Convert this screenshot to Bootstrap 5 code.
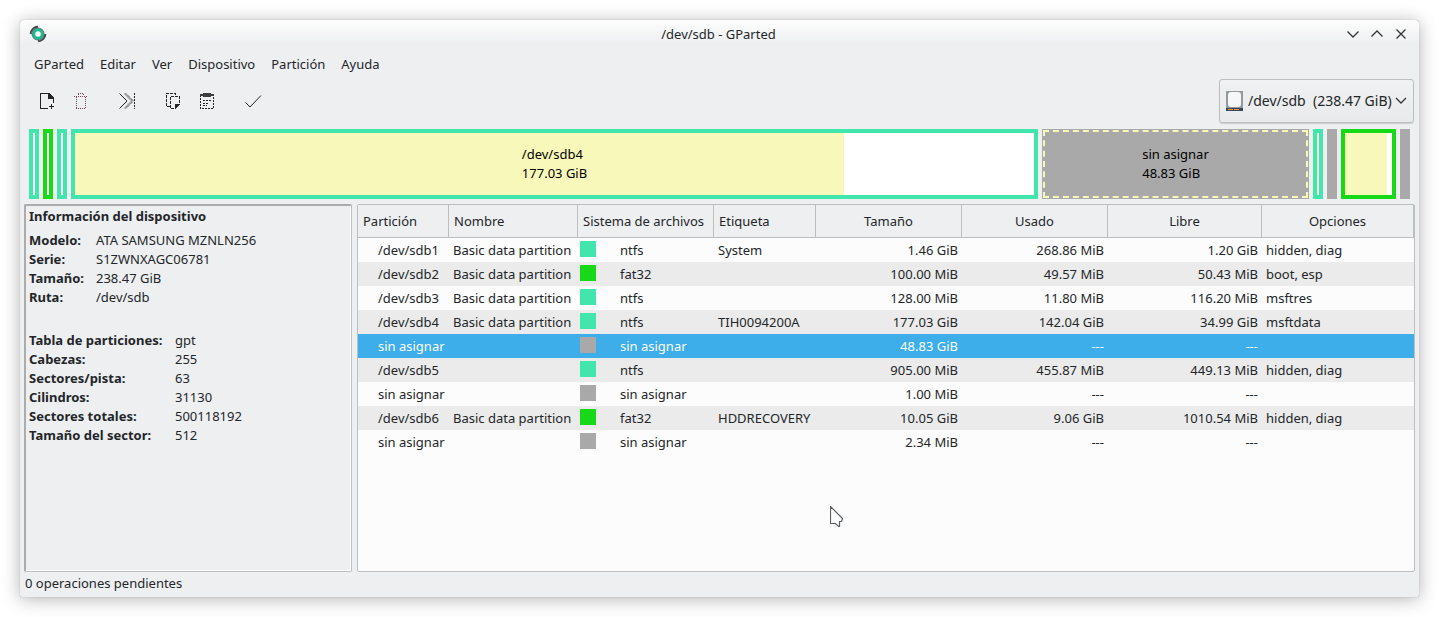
<!DOCTYPE html>
<html lang="es">
<head>
<meta charset="utf-8">
<meta name="viewport" content="width=device-width, initial-scale=1">
<title>/dev/sdb - GParted</title>
<link href="https://cdn.jsdelivr.net/npm/bootstrap@5.3.0/dist/css/bootstrap.min.css" rel="stylesheet">
<style>
:root{--ntfs:#42e5ac;--fat:#18d918;--free:#a9a9a9;--used:#f8f8ba;--line:#bcbebf;--ink:#232629}
body{background:#fff;color:var(--ink);font:13px/19px "Noto Sans",sans-serif}
.frame{min-height:calc(100vh - 40px);margin:20px;background:#eeeff1 linear-gradient(#fdfdfd,#eeeff1) no-repeat top/100% 24px;border-radius:4px 4px 2px 2px;box-shadow:0 0 1px rgba(0,0,0,.4),0 2px 18px rgba(0,0,0,.3)}
.titlebar{height:28px;padding:0 10px 0 8px}
.side{flex:1 0 0}
.plain{background:none;border:0;padding:0;color:inherit;line-height:0}
.menus{height:31px;padding:1px 0 0 14px;gap:16px}
.menus .plain{line-height:19px}
.tools{height:44px;padding:0 5px 0 10px}
.tool{width:34px;height:34px}
.tool + .split{width:12px}
.device select{width:195px;height:44px;padding:0 18px 2px 28px;border:1px solid var(--line);border-radius:3px;background:linear-gradient(#f0f1f2,#e9eaec);box-shadow:0 1px 1px rgba(0,0,0,.15);font-size:14px;color:inherit;appearance:none}
.device svg{position:absolute;pointer-events:none;top:12px}
.device .disk{left:7px}
.device .chev{right:7px}
.map{height:70px;margin:6px 9px 0;gap:4px}
.part{border:4px solid var(--ntfs);background:#fff;min-width:10px;color:#000}
.part.fat{border-color:var(--fat)}
.part.none{border-color:var(--free);background:var(--free)}
.part .fill{position:absolute;inset:0 auto 0 0;background:var(--used)}
.part.picked{border:0;outline:2px dashed var(--used);outline-offset:-3px}
.panes{margin:5px 4px 0;gap:5px}
.info{width:328px;border:1px solid var(--line);border-top:2px solid #aaacae;border-left:2px solid #aaacae;border-radius:2px;padding:1px 3px;box-shadow:inset -1px -1px #fff}
.info h2{font-size:13px;line-height:19px;font-weight:700;margin:0 0 5px}
.facts{display:grid;grid-template-columns:67px 1fr;margin:0 0 24px}
.facts.wide{grid-template-columns:146px 1fr}
.facts dd{margin:0}
.list{border:1px solid var(--line);border-radius:2px;background:#fcfcfc;min-width:0}
.list table{table-layout:fixed;width:100%;border-collapse:separate;border-spacing:0}
.list th{height:33px;padding:1px 5px 0;background:#eeeff1;border-right:1px solid var(--line);border-bottom:1px solid var(--line);font-weight:400;white-space:nowrap}
.list td{height:24px;padding:0 4px;white-space:nowrap}
.list td:first-child{padding-left:20px}
.list td:nth-child(3){padding-left:2px}
.list td:nth-child(n+5):nth-child(-n+7){text-align:right}
.list tbody tr:nth-child(even){background:#ebebeb}
.list tbody tr.sel{background:#3daee9;color:#fcfcfc}
.swatch{width:16px;height:16px;margin-right:24px;background:var(--ntfs)}
.swatch.fat{background:var(--fat)}
.swatch.none{background:var(--free)}
.statusline{height:25px;padding:2px 5px}
.pointer{left:472px;top:301px}
</style>
</head>
<body>
<main class="frame d-flex flex-column">
  <header class="titlebar d-flex align-items-center">
    <div class="side d-flex"><svg width="20" height="20" viewBox="0 0 20 20" aria-hidden="true"><circle cx="10" cy="10" r="6.500" fill="#687880"/><path d="M10 2.700a7.300 7.300 0 0 0-7.300 7.300M10 17.300a7.300 7.300 0 0 0 7.300-7.300" fill="none" stroke="#414b50" stroke-width="2"/><circle cx="10" cy="10" r="4.200" fill="#fff" stroke="#1eb98f" stroke-width="3"/></svg></div>
    <span>/dev/sdb - GParted</span>
    <div class="side d-flex gap-2 justify-content-end">
      <button class="plain" aria-label="Minimizar"><svg width="16" height="16" fill="none" stroke="#31363b" stroke-width="1.3"><path d="M2.500 5.500l5.500 5.500 5.500-5.500"/></svg></button>
      <button class="plain" aria-label="Maximizar"><svg width="16" height="16" fill="none" stroke="#31363b" stroke-width="1.3"><path d="M2.500 10.500l5.500-5.500 5.500 5.500"/></svg></button>
      <button class="plain" aria-label="Cerrar"><svg width="16" height="16" fill="none" stroke="#31363b" stroke-width="1.3"><path d="M3.500 3.500l9 9m0-9l-9 9"/></svg></button>
    </div>
  </header>
  <nav class="menus d-flex align-items-center">
    <button class="plain">GParted</button><button class="plain">Editar</button><button class="plain">Ver</button><button class="plain">Dispositivo</button><button class="plain">Partición</button><button class="plain">Ayuda</button>
  </nav>
  <div class="tools d-flex align-items-center" role="toolbar">
    <button class="plain tool" aria-label="Nueva"><svg width="18" height="18" fill="none" stroke="#232629" shape-rendering="crispEdges"><path d="M10 16.500H2.500V1.500H11M15.500 6v5M11 14.500h5M13.500 12v5"/><path d="M10 1h1l5 5v1h-6z" fill="#232629" stroke="none"/></svg></button>
    <button class="plain tool" aria-label="Borrar"><svg width="18" height="18" fill="none" stroke="#6d4a50" stroke-dasharray="1 1" shape-rendering="crispEdges"><path d="M2 4.500h14M6 1.500h6M4.500 5v11M13.500 5v11M4 16.500h10M6.500 2v2M11.500 2v2"/></svg></button>
    <span class="split"></span>
    <button class="plain tool" aria-label="Redimensionar/Mover"><svg width="18" height="18" fill="none" stroke="#232629"><path d="M6.500 1.500l7.500 7.500-7.500 7.500" stroke="#a0a2a4" stroke-width="1.600"/><path d="M1.500 1.500l7.500 7.500-7.500 7.500"/><path d="M8 1.500l7.500 7.500-7.500 7.500" stroke-dasharray="1 1"/><path d="M16.500 1v16" stroke-dasharray="2 1" shape-rendering="crispEdges"/></svg></button>
    <span class="split"></span>
    <button class="plain tool" aria-label="Copiar"><svg width="18" height="18" fill="none" stroke="#232629" shape-rendering="crispEdges"><path d="M6 14.500H2.500v-13h9V4M6.500 4.500h9V12M6.500 5v11.500H11" stroke-dasharray="3 1"/><path d="M11 12h5l-5 5z" fill="#232629" stroke="none"/></svg></button>
    <button class="plain tool" aria-label="Pegar"><svg width="18" height="18" fill="none" stroke="#232629" shape-rendering="crispEdges"><path d="M2.500 3v13.500h13V3M5 8.500h8M5 11.500h6M5 13.500h4" stroke-dasharray="2 1"/><path d="M2 2h3V1h8v1h3v2h-3v1H5V4H2z" fill="#3b3e41" stroke="none"/></svg></button>
    <span class="split"></span>
    <button class="plain tool" aria-label="Aplicar"><svg width="18" height="18" fill="none" stroke="#232629"><path d="M1.500 10.500l4.500 4.500L17 3.500"/></svg></button>
    <div class="device position-relative ms-auto">
      <svg class="disk" width="18" height="20" aria-hidden="true"><path d="M0 0h17v18H0z" fill="#929a9f"/><rect x="2" y="1" width="13" height="15" rx="3" fill="#f5f7f8"/><path d="M0 17h17v3H0z" fill="#3c464c"/><path d="M2 18.500h11" stroke="#e39a4a" stroke-dasharray="5 1"/></svg>
      <select class="d-block" aria-label="Dispositivo"><option>/dev/sdb&nbsp; (238.47 GiB)</option></select>
      <svg class="chev" width="12" height="20" fill="none" stroke="#31363b" stroke-width="1.3" aria-hidden="true"><path d="M1 7l5 5 5-5"/></svg>
    </div>
  </div>
  <section class="map d-flex" aria-label="Particiones">
    <div class="part"></div>
    <div class="part fat"></div>
    <div class="part"></div>
    <div class="part position-relative d-flex align-items-center justify-content-center" style="flex:959 1 0"><div class="fill" style="width:80.2%"></div><span class="position-relative">/dev/sdb4<br>177.03 GiB</span></div>
    <div class="part none picked d-flex align-items-center justify-content-center" style="flex:267 1 0"><span>sin asignar<br>48.83 GiB</span></div>
    <div class="part position-relative"><div class="fill" style="width:50%"></div></div>
    <div class="part none"></div>
    <div class="part fat position-relative" style="flex:47 1 0"><div class="fill" style="width:90.1%"></div></div>
    <div class="part none"></div>
  </section>
  <div class="panes d-flex flex-fill">
    <aside class="info flex-shrink-0">
      <h2>Información del dispositivo</h2>
      <dl class="facts"><dt>Modelo:</dt><dd>ATA SAMSUNG MZNLN256</dd><dt>Serie:</dt><dd>S1ZWNXAGC06781</dd><dt>Tamaño:</dt><dd>238.47 GiB</dd><dt>Ruta:</dt><dd>/dev/sdb</dd></dl>
      <dl class="facts wide"><dt>Tabla de particiones:</dt><dd>gpt</dd><dt>Cabezas:</dt><dd>255</dd><dt>Sectores/pista:</dt><dd>63</dd><dt>Cilindros:</dt><dd>31130</dd><dt>Sectores totales:</dt><dd>500118192</dd><dt>Tamaño del sector:</dt><dd>512</dd></dl>
    </aside>
    <section class="list flex-fill position-relative">
      <table>
        <colgroup><col style="width:91px"><col style="width:129px"><col style="width:136px"><col style="width:102px"><col style="width:146px"><col style="width:146px"><col style="width:154px"><col></colgroup>
        <thead><tr><th>Partición</th><th>Nombre</th><th>Sistema de archivos</th><th>Etiqueta</th><th class="text-center">Tamaño</th><th class="text-center">Usado</th><th class="text-center">Libre</th><th class="text-center">Opciones</th></tr></thead>
        <tbody>
          <tr><td>/dev/sdb1</td><td>Basic data partition</td><td><div class="d-flex"><span class="swatch"></span>ntfs</div></td><td>System</td><td>1.46 GiB</td><td>268.86 MiB</td><td>1.20 GiB</td><td>hidden, diag</td></tr>
          <tr><td>/dev/sdb2</td><td>Basic data partition</td><td><div class="d-flex"><span class="swatch fat"></span>fat32</div></td><td></td><td>100.00 MiB</td><td>49.57 MiB</td><td>50.43 MiB</td><td>boot, esp</td></tr>
          <tr><td>/dev/sdb3</td><td>Basic data partition</td><td><div class="d-flex"><span class="swatch"></span>ntfs</div></td><td></td><td>128.00 MiB</td><td>11.80 MiB</td><td>116.20 MiB</td><td>msftres</td></tr>
          <tr><td>/dev/sdb4</td><td>Basic data partition</td><td><div class="d-flex"><span class="swatch"></span>ntfs</div></td><td>TIH0094200A</td><td>177.03 GiB</td><td>142.04 GiB</td><td>34.99 GiB</td><td>msftdata</td></tr>
          <tr class="sel"><td>sin asignar</td><td></td><td><div class="d-flex"><span class="swatch none"></span>sin asignar</div></td><td></td><td>48.83 GiB</td><td>---</td><td>---</td><td></td></tr>
          <tr><td>/dev/sdb5</td><td></td><td><div class="d-flex"><span class="swatch"></span>ntfs</div></td><td></td><td>905.00 MiB</td><td>455.87 MiB</td><td>449.13 MiB</td><td>hidden, diag</td></tr>
          <tr><td>sin asignar</td><td></td><td><div class="d-flex"><span class="swatch none"></span>sin asignar</div></td><td></td><td>1.00 MiB</td><td>---</td><td>---</td><td></td></tr>
          <tr><td>/dev/sdb6</td><td>Basic data partition</td><td><div class="d-flex"><span class="swatch fat"></span>fat32</div></td><td>HDDRECOVERY</td><td>10.05 GiB</td><td>9.06 GiB</td><td>1010.54 MiB</td><td>hidden, diag</td></tr>
          <tr><td>sin asignar</td><td></td><td><div class="d-flex"><span class="swatch none"></span>sin asignar</div></td><td></td><td>2.34 MiB</td><td>---</td><td>---</td><td></td></tr>
        </tbody>
      </table>
      <svg class="pointer position-absolute" width="14" height="22" aria-hidden="true"><path d="M.5.5v17h5l3 3h1v-5h2l1-3z" fill="#fff" stroke="#5a6064" stroke-width="1.200"/></svg>
    </section>
  </div>
  <footer class="statusline">0 operaciones pendientes</footer>
</main>
<script src="https://cdn.jsdelivr.net/npm/bootstrap@5.3.0/dist/js/bootstrap.bundle.min.js"></script>
</body>
</html>
